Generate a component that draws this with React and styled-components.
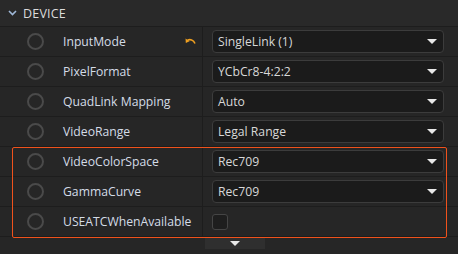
import React from 'react'
import styled, { createGlobalStyle } from 'styled-components';

const Global = createGlobalStyle`
  html, body { margin: 0; padding: 0; background: #262626; }
  body {
    width: 458px;
    height: 254px;
    overflow: hidden;
    font-family: "Open Sans", "Noto Sans", sans-serif;
  }
`;

const rows = [
  { label: 'InputMode', value: 'SingleLink (1)', reset: true },
  { label: 'PixelFormat', value: 'YCbCr8-4:2:2' },
  { label: 'QuadLink Mapping', value: 'Auto' },
  { label: 'VideoRange', value: 'Legal Range' },
];

const marked = [
  { label: 'VideoColorSpace', value: 'Rec709' },
  { label: 'GammaCurve', value: 'Rec709' },
  { label: 'USEATCWhenAvailable', check: true },
];

const Arrow = ({ size = 10 }) => (
  <svg width={size} height={size / 2} viewBox="0 0 10 5">
    <path d="M0 0 H10 L5 5 Z" fill="#e8e8e8" />
  </svg>
);

const ResetIcon = () => (
  <svg width="11" height="8" viewBox="0 0 11 8">
    <path d="M2.5 2.2 C5 1 8.5 1.6 10 5.5" stroke="#f0a020" strokeWidth="1.6" fill="none" />
    <path d="M0.5 0.5 L0.8 5 L4.6 3.2 Z" fill="#f0a020" />
  </svg>
);

const Row = ({ label, value, reset, check }) => (
  <RowWrap>
    <NameCell>
      <Radio />
      <Label>{label}</Label>
      {reset && <ResetSlot><ResetIcon /></ResetSlot>}
    </NameCell>
    <ValueCell>
      {check ? <Check /> : (
        <Select>
          <span>{value}</span>
          <Arrow />
        </Select>
      )}
    </ValueCell>
  </RowWrap>
);

const App = () => {
  return (
    <>
      <Global />
      <Panel>
        <Header>
          <svg width="9" height="6" viewBox="0 0 9 6">
            <path d="M1 1 L4.5 4.5 L8 1" stroke="#9fb8d8" strokeWidth="1.6" fill="none" />
          </svg>
          <span>DEVICE</span>
        </Header>
        {rows.map(r => <Row key={r.label} {...r} />)}
        <Marked>
          {marked.map(r => <Row key={r.label} {...r} />)}
        </Marked>
        <Footer>
          <More><Arrow /></More>
        </Footer>
      </Panel>
    </>
  )
}

const Panel = styled.div`
  width: 458px;
  height: 254px;
  background: #262626;
  color: #d6d6d6;
`;

const Header = styled.div`
  height: 26px;
  display: flex;
  align-items: center;
  gap: 6px;
  padding-left: 8px;
  background: #292929;
  border-bottom: 1px solid #1d1d1d;
  font-size: 12.5px;
  color: #dcdcdc;
  letter-spacing: 0.2px;
`;

const RowWrap = styled.div`
  height: 29px;
  display: grid;
  grid-template-columns: 203px 1fr;
  border-bottom: 1px solid #1d1d1d;
`;

const NameCell = styled.div`
  display: flex;
  align-items: center;
  padding-left: 27px;
  border-right: 1px solid #1d1d1d;
  position: relative;
`;

const Radio = styled.span`
  width: 13px;
  height: 13px;
  border: 2px solid #4a4a4a;
  border-radius: 50%;
  flex: none;
`;

const Label = styled.span`
  margin-left: 19px;
  font-size: 12.2px;
  color: #d4dce6;
`;

const ResetSlot = styled.span`
  position: absolute;
  left: 185px;
  top: 11px;
  display: flex;
`;

const ValueCell = styled.div`
  display: flex;
  align-items: center;
  padding: 0 14px 0 9px;
`;

const Select = styled.div`
  flex: 1;
  height: 21px;
  display: flex;
  align-items: center;
  justify-content: space-between;
  padding: 0 6px 0 5px;
  background: #1b1b1b;
  border: 1px solid #3c3c3c;
  border-radius: 4px;
  font-size: 12.2px;
  color: #d8d8d8;
`;

const Check = styled.span`
  width: 14px;
  height: 14px;
  background: #1e1e1e;
  border: 1px solid #454545;
  border-radius: 3px;
`;

const Marked = styled.div`
  position: relative;
  &::after {
    content: '';
    position: absolute;
    left: 12px;
    right: 11px;
    top: 0;
    bottom: -1px;
    border: 1.5px solid #f0521c;
    border-radius: 2px;
    pointer-events: none;
  }
`;

const Footer = styled.div`
  display: flex;
  padding-left: 205px;
  margin-top: 1px;
`;

const More = styled.div`
  width: 60px;
  height: 11px;
  background: #2f2f2f;
  display: flex;
  align-items: center;
  justify-content: center;
`;

export default App
